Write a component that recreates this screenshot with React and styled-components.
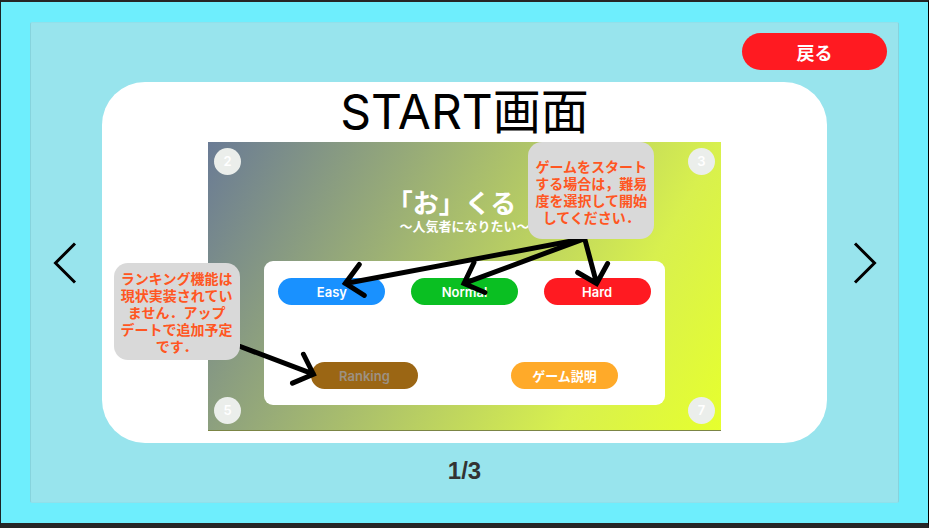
import React from 'react';
import styled, { createGlobalStyle } from 'styled-components';

const GlobalStyle = createGlobalStyle`
  *, *::before, *::after { box-sizing: border-box; }
  body {
    margin: 0;
    font-family: Inter, "Noto Sans CJK JP", sans-serif;
  }
  button { font-family: inherit; border: 0; padding: 0; cursor: pointer; }
  h1, h2, p { margin: 0; }
`;

const Frame = styled.div`
  display: flex;
  min-height: 100vh;
  padding: 20px 29px;
  background: #6eeefd;
  border-style: solid;
  border-width: 2px 1px 5px;
  border-color: #262626 #000 #262626 #1a2426;
`;

const Panel = styled.main`
  flex: 1;
  display: flex;
  flex-direction: column;
  background: #98e4ed;
  border: 1px solid #86d3dd;
  border-top-color: #91e0ea;
  border-bottom-color: #91e0ea;
  border-radius: 2px;
`;

const Toolbar = styled.header`
  display: flex;
  justify-content: flex-end;
  padding: 10px 11px 12px;
`;

const PillButton = styled.button`
  width: ${(p) => (p.$large ? 145 : 107)}px;
  height: ${(p) => (p.$large ? 37 : 27)}px;
  border-radius: 20px;
  background: ${(p) => p.$color};
  color: #fff;
  font-size: ${(p) => (p.$large ? 18 : 13)}px;
  font-weight: ${(p) => (p.$large ? 700 : 600)};
  &:disabled { color: #9c9183; cursor: default; }
`;

const Carousel = styled.section`
  flex: 1;
  display: grid;
  grid-template-columns: 71px 1fr 71px;
`;

const NavButton = styled.button`
  display: flex;
  align-items: center;
  justify-content: center;
  background: transparent;
`;

const Slide = styled.article`
  position: relative;
  display: flex;
  flex-direction: column;
  padding: 0 106px 12px;
  background: #fff;
  border-radius: 43px;
`;

const SlideTitle = styled.h1`
  height: 60px;
  line-height: 60px;
  font-size: 48px;
  font-weight: 400;
  text-align: center;
  color: #000;
`;

const Screen = styled.div`
  position: relative;
  flex: 1;
  display: flex;
  flex-direction: column;
  align-items: center;
  padding-bottom: 25px;
  background: linear-gradient(119deg, #6a7b95 0%, #d8f04e 76%, #e6ff2e 100%);
  border-bottom: 1px solid #7b8545;
`;

const GameTitle = styled.h2`
  margin-top: 47px;
  padding-right: 26px;
  font-size: 26px;
  line-height: 30px;
  font-weight: 700;
  color: #fff;
`;

const GameSubtitle = styled.p`
  font-size: 13px;
  line-height: 14px;
  font-weight: 700;
  color: #fff;
`;

const Menu = styled.div`
  flex: 1;
  display: flex;
  flex-direction: column;
  justify-content: space-between;
  width: 78%;
  margin-top: 28px;
  padding: 17px 0 16px;
  background: #fff;
  border-radius: 9px;
`;

const MenuRow = styled.div`
  display: flex;
  justify-content: ${(p) => (p.$spread ? 'space-between' : 'space-around')};
  padding: 0 ${(p) => (p.$spread ? 14 : 0)}px;
`;

const Corner = styled.span`
  position: absolute;
  ${(p) => p.$v}: 6px;
  ${(p) => p.$h}: 6px;
  width: 27px;
  height: 27px;
  border-radius: 50%;
  background: #ebeeeb;
  color: #fff;
  font-size: 13px;
  line-height: 27px;
  font-weight: 600;
  text-align: center;
`;

const Arrows = styled.svg`
  position: absolute;
  inset: 0;
  width: 100%;
  height: 100%;
  pointer-events: none;
`;

const Note = styled.p`
  position: absolute;
  left: ${(p) => p.$left}%;
  top: ${(p) => p.$top}%;
  display: flex;
  align-items: center;
  justify-content: center;
  width: 126px;
  height: 97px;
  padding: 3px 5px 0;
  border-radius: 14px;
  background: #d9d9d9;
  color: #ff5622;
  font-family: "Noto Sans CJK JP", sans-serif;
  font-size: 14px;
  line-height: 17px;
  font-weight: 700;
  line-break: strict;
  text-align: center;
`;

const PageNumber = styled.footer`
  height: 59px;
  line-height: 55px;
  text-align: center;
  font-family: "Liberation Sans", Arial, sans-serif;
  font-size: 24px;
  font-weight: 700;
  color: #333;
`;

const corners = [
  { n: 2, v: 'top', h: 'left' },
  { n: 3, v: 'top', h: 'right' },
  { n: 5, v: 'bottom', h: 'left' },
  { n: 7, v: 'bottom', h: 'right' },
];

const levels = [
  { label: 'Easy', color: '#1991ff' },
  { label: 'Normal', color: '#0abf22' },
  { label: 'Hard', color: '#ff1a21' },
];

function Chevron({ d }) {
  return (
    <svg width="28" height="44" viewBox="0 0 28 44" fill="none" stroke="#000" strokeWidth="3" aria-hidden="true">
      <path d={d} />
    </svg>
  );
}

export default function App() {
  return (
    <>
      <GlobalStyle />
      <Frame>
        <Panel lang="ja">
          <Toolbar>
            <PillButton $large $color="#ff1a21">戻る</PillButton>
          </Toolbar>
          <Carousel>
            <NavButton aria-label="前へ"><Chevron d="M22 2.5 2.5 22 22 41.5" /></NavButton>
            <Slide>
              <SlideTitle>START画面</SlideTitle>
              <Screen>
                {corners.map((c) => (
                  <Corner key={c.n} $v={c.v} $h={c.h}>{c.n}</Corner>
                ))}
                <GameTitle>「お」くる</GameTitle>
                <GameSubtitle>〜人気者になりたい〜</GameSubtitle>
                <Menu>
                  <MenuRow $spread>
                    {levels.map((l) => (
                      <PillButton key={l.label} $color={l.color}>{l.label}</PillButton>
                    ))}
                  </MenuRow>
                  <MenuRow>
                    <PillButton $color="#9b6614" disabled>Ranking</PillButton>
                    <PillButton $color="#ffaa29">ゲーム説明</PillButton>
                  </MenuRow>
                </Menu>
              </Screen>
              <Arrows viewBox="0 0 725 362" fill="none" stroke="#000" strokeWidth="5" strokeLinecap="round" aria-hidden="true">
                <path d="M483 157 243 202M257 183 243 202 262 214" />
                <path d="M483 157 362 202M372 181 362 202 383 211" />
                <path d="M483 157 495 202M476 191 495 202 506 182" />
                <path d="M137 265 211 293M201 273 211 293 190 302" />
              </Arrows>
              <Note $left={58.8} $top={16.6}>ゲームをスタートする場合は，難易度を選択して開始してください．</Note>
              <Note $left={1.6} $top={50}>ランキング機能は現状実装されていません．アップデートで追加予定です．</Note>
            </Slide>
            <NavButton aria-label="次へ"><Chevron d="M6 2.5 25.5 22 6 41.5" /></NavButton>
          </Carousel>
          <PageNumber>1/3</PageNumber>
        </Panel>
      </Frame>
    </>
  );
}
